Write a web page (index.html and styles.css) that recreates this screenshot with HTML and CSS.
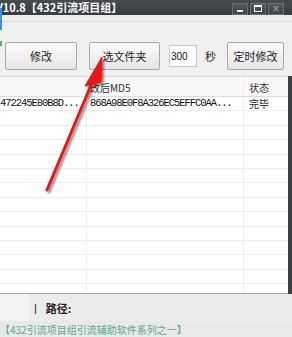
FILE: index.html
```html
<!DOCTYPE html>
<html lang="zh-CN">
<head>
  <meta charset="UTF-8" />
  <title>432引流项目组</title>
  <link rel="stylesheet" href="styles.css">
</head>
<body>
  <div class="window">
    <div class="titlebar">
      <span class="title">V10.8【432引流项目组】</span>
      <div class="winbtns">
        <span class="wb wb-min"><i></i></span>
        <span class="wb wb-max"><i></i></span>
        <span class="wb wb-close">×</span>
      </div>
    </div>
    <div class="menuband"></div>

    <div class="toolbar">
      <button class="btn btn-edit">修改</button>
      <button class="btn btn-folder">选文件夹</button>
      <input class="secs" value="300">
      <span class="unit">秒</span>
      <button class="btn btn-timer">定时修改</button>
    </div>

    <div class="grid-wrap">
      <div class="grid">
        <div class="row head">
          <div class="c1"></div>
          <div class="c2">改后MD5</div>
          <div class="c3">状态</div>
        </div>
        <div class="rows">
          <div class="row">
            <div class="c1 hex">472245E80B8D...</div>
            <div class="c2 hex">868A98E0F8A326EC5EFFC0AA...</div>
            <div class="c3">完毕</div>
          </div>
          <div class="row"><div class="c1"></div><div class="c2"></div><div class="c3"></div></div>
          <div class="row"><div class="c1"></div><div class="c2"></div><div class="c3"></div></div>
          <div class="row"><div class="c1"></div><div class="c2"></div><div class="c3"></div></div>
          <div class="row"><div class="c1"></div><div class="c2"></div><div class="c3"></div></div>
          <div class="row"><div class="c1"></div><div class="c2"></div><div class="c3"></div></div>
          <div class="row"><div class="c1"></div><div class="c2"></div><div class="c3"></div></div>
          <div class="row"><div class="c1"></div><div class="c2"></div><div class="c3"></div></div>
          <div class="row"><div class="c1"></div><div class="c2"></div><div class="c3"></div></div>
          <div class="row"><div class="c1"></div><div class="c2"></div><div class="c3"></div></div>
          <div class="row"><div class="c1"></div><div class="c2"></div><div class="c3"></div></div>
          <div class="row"><div class="c1"></div><div class="c2"></div><div class="c3"></div></div>
          <div class="row"><div class="c1"></div><div class="c2"></div><div class="c3"></div></div>
          <div class="row"><div class="c1"></div><div class="c2"></div><div class="c3"></div></div>
        </div>
      </div>
      <div class="frame-edge"></div>
    </div>

    <div class="status">
      <div class="status-left"></div>
      <span class="sep">|</span>
      <span class="path">路径:</span>
    </div>
    <div class="footer">【432引流项目组引流辅助软件系列之一】</div>

    <!-- bits of the window behind -->
    <div class="behind-blue"></div>
    <div class="behind-green"></div>

    <svg class="arrow" width="292" height="337" viewBox="0 0 292 337">
      <defs>
        <filter id="shade" x="-20%" y="-20%" width="140%" height="140%">
          <feDropShadow dx="2" dy="2" stdDeviation="1.2" flood-color="#000" flood-opacity="0.45"/>
        </filter>
      </defs>
      <g filter="url(#shade)" fill="#ea1313" stroke="#ea1313">
        <line x1="47" y1="190" x2="94" y2="78" stroke-width="3" stroke-linecap="round"/>
        <polygon points="102,57 85,86 101,82" stroke-width="1" stroke-linejoin="round"/>
      </g>
    </svg>
  </div>
</body>
</html>
```

FILE: styles.css
```css
body {
  margin: 0;
  background: #f0f0f0;
  overflow: hidden;
}

.window {
  position: relative;
  width: 292px;
  height: 337px;
  overflow: hidden;
  background: #f0f0f0;
  font-family: "Noto Sans CJK SC", "Noto Sans", sans-serif;
  color: #222;
}

/* title bar */
.titlebar {
  height: 15px;
  background: linear-gradient(#464b50, #383c41);
  display: flex;
  align-items: center;
  justify-content: space-between;
  overflow: hidden;
}

.title {
  margin-left: -4px;
  font-size: 11px;
  font-weight: bold;
  color: #fff;
  white-space: nowrap;
  line-height: 15px;
}

.winbtns {
  display: flex;
  gap: 2px;
  margin-right: 8px;
  margin-top: 2px;
}

.wb {
  width: 14px;
  height: 10px;
  border: 1px solid #6c7176;
  background: linear-gradient(#55595e, #3c4045);
  display: flex;
  align-items: center;
  justify-content: center;
  box-sizing: content-box;
}

.wb-min i {
  width: 6px;
  height: 2px;
  background: #f4f4f4;
  margin-top: 4px;
}

.wb-max i {
  width: 6px;
  height: 4px;
  border: 1px solid #f4f4f4;
  border-top-width: 2px;
}

.wb-close {
  color: #9a9ea2;
  font-family: "DejaVu Sans", sans-serif;
  font-size: 10px;
  line-height: 10px;
}

.menuband {
  height: 6px;
  background: #ededed;
  border-bottom: 1px solid #dadada;
}

/* toolbar */
.toolbar {
  height: 54px;
  box-sizing: border-box;
  padding: 20px 0 0 5px;
  display: flex;
  align-items: flex-start;
}

.btn {
  height: 28px;
  padding: 0;
  border: 1px solid #a9a9a9;
  border-radius: 2px;
  background: linear-gradient(#fbfbfb, #e6e6e6);
  font-family: "Noto Sans CJK SC", sans-serif;
  font-size: 11px;
  color: #222;
}

.btn-edit {
  width: 72px;
}

.btn-folder {
  width: 71px;
  margin-left: 12px;
}

.btn-timer {
  width: 57px;
  margin-left: 11px;
}

.secs {
  width: 28px;
  height: 22px;
  margin: 3px 0 0 9px;
  padding: 0 0 0 1px;
  box-sizing: border-box;
  border: 1px solid #c9c9c9;
  background: #fff;
  font-family: "Liberation Sans", sans-serif;
  font-size: 10px;
  color: #111;
}

.unit {
  margin-left: 8px;
  font-size: 11px;
  line-height: 28px;
}

/* list */
.grid-wrap {
  display: flex;
  height: 218px;
}

.grid {
  flex: 1;
  background: #fff;
  border-top: 1px solid #d4d4d4;
  border-bottom: 1px solid #a4a4a4;
  display: flex;
  flex-direction: column;
  overflow: hidden;
}

.frame-edge {
  width: 4px;
  background: #3b4045;
}

.row {
  display: flex;
  height: 14.4px;
  box-sizing: border-box;
  border-bottom: 1px solid #ededed;
  font-size: 10px;
  line-height: 13px;
}

.row.head {
  height: 20px;
  background: #f8f8f8;
  border-bottom: 1px solid #dcdcdc;
  line-height: 22px;
  color: #333;
}

.rows {
  flex: 1;
  overflow: hidden;
}

.c1 {
  width: 86px;
  border-right: 1px solid #efefef;
  overflow: hidden;
  white-space: nowrap;
}

.c2 {
  width: 157px;
  padding-left: 3px;
  box-sizing: border-box;
  border-right: 1px solid #efefef;
  overflow: hidden;
  white-space: nowrap;
}

.c3 {
  flex: 1;
  padding-left: 5px;
}

.hex {
  font-family: "Liberation Mono", monospace;
  font-size: 10.5px;
  letter-spacing: -1.05px;
  color: #111;
}

/* status + footer */
.status {
  height: 27px;
  display: flex;
  align-items: center;
  background: #ececec;
}

.status-left {
  width: 29px;
  align-self: stretch;
  background: #f3f3f3;
}

.sep {
  margin-left: 5px;
  font-family: "Liberation Sans", sans-serif;
  font-size: 11px;
}

.path {
  margin-left: 9px;
  font-size: 11px;
  font-weight: bold;
}

.footer {
  height: 17px;
  background: #e9e9e9;
  color: #5ea58d;
  font-size: 10px;
  line-height: 17px;
  white-space: nowrap;
}

/* overlays */
.behind-blue {
  position: absolute;
  left: 0;
  top: 8px;
  width: 2px;
  height: 22px;
  background: #3d8fe4;
}

.behind-green {
  position: absolute;
  left: 0;
  top: 41px;
  width: 2px;
  height: 5px;
  background: #56b456;
}

.arrow {
  position: absolute;
  left: 0;
  top: 0;
  pointer-events: none;
}
```
